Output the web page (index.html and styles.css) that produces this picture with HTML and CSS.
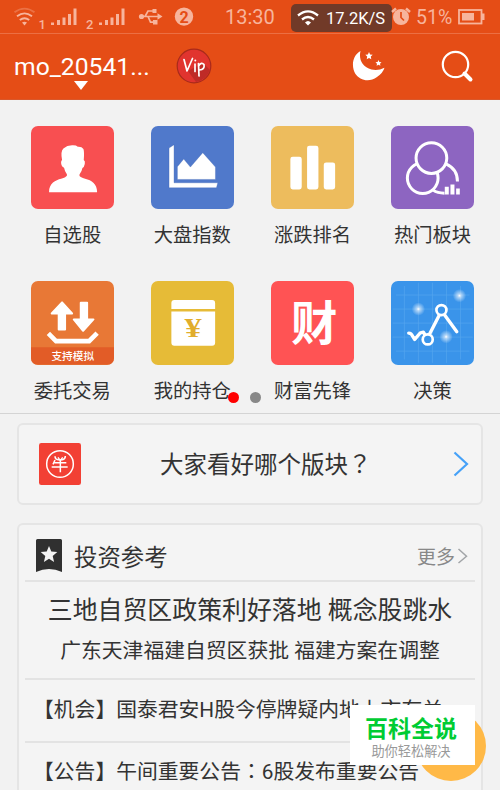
FILE: index.html
```html
<!DOCTYPE html>
<html lang="zh-CN">
<head>
<meta charset="utf-8">
<title>自选股</title>
<link rel="stylesheet" href="styles.css">
</head>
<body>
<div class="phone">
  <header class="top">
    <div class="status">
      <svg class="status-left" viewBox="0 0 200 33">
        <g fill="none" stroke="#f7b49c" stroke-width="1.9">
          <path d="M14.5 12.2Q24.5 5 34.5 12.2" opacity=".35"/>
          <path d="M17 16.2Q24.500 10.500 32 16.200"/>
          <path d="M19.800 20Q24.500 16.500 29.200 20"/>
        </g>
        <g fill="#f7b49c">
          <path d="M22 22.500Q24.500 21 27 22.500L24.500 25.500z"/>
          <path d="M51 22.500h3v2.500h-3zM57 20h3v5h-3zM62.500 17.500h3V25h-3zM68 14h3v11h-3zM73.500 8.500h3V25h-3z"/>
          <path d="M99 22.500h3v2.500h-3zM105 20h3v5h-3zM110.500 17.500h3V25h-3zM116 14h3v11h-3zM121.500 8.500h3V25h-3z"/>
          <circle cx="141.500" cy="16.500" r="2.600"/>
          <path d="M157.500 13.300l5 3.200-5 3.200z"/>
          <rect x="152.500" y="9" width="4" height="4"/>
          <rect x="153" y="20" width="4.500" height="4.500"/>
          <circle cx="184" cy="16.600" r="9.200"/>
        </g>
        <path d="M141 16.500h18M145 16.500l3-5.500h6M148 16.500l2.500 5.700h4" fill="none" stroke="#f7b49c" stroke-width="1.700"/>
        <text class="sim" x="38.500" y="28.500">1</text>
        <text class="sim" x="86" y="28.500">2</text>
        <text class="count" x="184" y="22.500">2</text>
      </svg>
      <span class="clock">13:30</span>
      <div class="speed">
        <svg width="22" height="18" viewBox="0 0 22 18">
          <g fill="none" stroke="#fff" stroke-width="2.300"><path d="M1 6.500Q11-1.800 21 6.500"/><path d="M5 10.500Q11 5.500 17 10.500"/></g>
          <path d="M8 13.500Q11 10.500 14 13.500L11 16.500z" fill="#fff"/>
        </svg>
        <span>17.2K/S</span>
      </div>
      <svg class="alarm" width="20" height="20" viewBox="0 0 20 20">
        <circle cx="10" cy="10" r="8" fill="#f7b49c"/>
        <path d="M10 5v5.500l3 3" fill="none" stroke="#e54d16" stroke-width="1.700"/>
        <path d="M1 5L5 1.500M15 1.500L19 5" stroke="#f7b49c" stroke-width="2.500"/>
      </svg>
      <span class="percent">51%</span>
      <svg class="battery" width="27" height="16" viewBox="0 0 27 16">
        <rect x="1" y="1" width="22.500" height="13.500" fill="none" stroke="#f7b49c" stroke-width="1.800"/>
        <path d="M4 4h12v7.500H4zM24 4.500h2.500v6.500H24z" fill="#f7b49c"/>
      </svg>
    </div>
    <div class="bar">
      <div class="user">
        <span class="name">mo_20541...</span>
        <span class="caret"></span>
      </div>
      <svg class="vip" width="36" height="36" viewBox="0 0 36 36">
        <circle cx="18" cy="18" r="16.800" fill="#e1342f" stroke="#a92a1b" stroke-width="1.200"/>
        <path d="M12 23L27 15l7 7Q30 32 20 34z" fill="#bf2b27"/>
        <g fill="none" stroke="#fff" stroke-width="1.700" stroke-linecap="round" stroke-linejoin="round">
          <path d="M8 11.500l3 11.500L16.500 10.500M19 16v7.500M22.500 15.500L23 28M22.500 18q3-4.500 5.500-1.500Q29 21.500 23.500 22"/>
        </g>
        <circle cx="19.300" cy="12.500" r="1" fill="#fff"/>
      </svg>
      <svg class="moon" width="34" height="32" viewBox="0 0 34 32">
        <g fill="#fff">
          <path d="M8.500 1C-.5 6-.5 18 3.500 24S17 33 25 27Q31 23 32.500 17.800 26 21 19.500 19.500C10 17 6.500 9 8.500 1z"/>
          <path d="M17 2l1.100 2.400 2.600.4-1.900 1.800.5 2.700L17 8l-2.300 1.300.5-2.700-1.900-1.800 2.600-.4z"/>
          <path d="M26.500 10l.9 1.900 2.100.3-1.500 1.500.4 2.100-1.900-1-1.900 1 .4-2.100-1.500-1.500 2.100-.3z"/>
        </g>
      </svg>
      <svg class="search" width="34" height="34" viewBox="0 0 34 34">
        <circle cx="14.500" cy="14.500" r="12.700" fill="none" stroke="#fff" stroke-width="2.200"/>
        <path d="M23.500 23.500l6 6" stroke="#fff" stroke-width="4" stroke-linecap="round"/>
      </svg>
    </div>
  </header>

  <nav class="apps">
    <a class="app">
      <svg class="tile red" viewBox="0 0 250 250"><path fill="#fff" d="M54 198c0-27 20-36 36-40 14-4 20-8 17-14q-6-8-8-19-8-3-9-15 0-6 3-8-5-27 4-35 12-10 29-9 10 0 14 4 12-1 17 7 3 9 1 33 5 3 3 12-2 10-7 12-2 11-8 18c-4 7 4 10 16 14 20 5 36 15 36 40z"/></svg>
      <span>自选股</span>
    </a>
    <a class="app">
      <svg class="tile blue" viewBox="0 0 250 250"><path fill="#fff" stroke="#3e63b4" stroke-width="1" d="M54 66l15-10v114h131l-4 15H54zM79 122l19-23 20 24 37-43 38 43v37H79z"/></svg>
      <span>大盘指数</span>
    </a>
    <a class="app">
      <svg class="tile amber" viewBox="0 0 250 250"><g fill="#fff"><rect x="58" y="92" width="34" height="98" rx="7"/><rect x="108" y="59" width="34" height="131" rx="7"/><rect x="158" y="109" width="34" height="81" rx="7"/></g></svg>
      <span>涨跌排名</span>
    </a>
    <a class="app">
      <svg class="tile purple" viewBox="0 0 250 250"><g fill="none" stroke="#fff" stroke-width="9"><path d="M166 114q33 15 33 52M126 192q13 9 34 9"/><circle cx="95" cy="156" r="46"/><circle cx="121" cy="96" r="46" fill="#8d65c1"/></g><path fill="#fff" d="M161 182h12v23h-12zM178 175h12v30h-12zM195 187h11v18h-11z"/></svg>
      <span>热门板块</span>
    </a>
    <a class="app">
      <svg class="tile orange" viewBox="0 0 250 250"><path fill="#e25c27" d="M0 198h250v52H0z"/><g fill="#fff" stroke="#fff" stroke-width="6" stroke-linejoin="round"><path d="M93 64l30 33h-21v48H83V97H62zM149 65h19v50h19l-31 34-28-34h21z"/></g><path d="M52 157l23 23h99l24-24" fill="none" stroke="#fff" stroke-width="14"/><text class="tile-note" x="125" y="237">支持模拟</text></svg>
      <span>委托交易</span>
    </a>
    <a class="app">
      <svg class="tile gold" viewBox="0 0 250 250"><path fill="#fff" d="M61 84V66q0-9 9-9h113q9 0 9 9v18zM61 91h131v94q0 9-9 9H70q-9 0-9-9z"/><text class="yen" transform="translate(126 168) scale(1.25 1)">¥</text></svg>
      <span>我的持仓</span>
    </a>
    <a class="app">
      <svg class="tile coral" viewBox="0 0 250 250"><text class="wealth" x="129" y="178">财</text></svg>
      <span>财富先锋</span>
    </a>
    <a class="app">
      <svg class="tile sky" viewBox="0 0 250 250">
        <defs><radialGradient id="glow"><stop offset="0" stop-color="#fff"/><stop offset=".25" stop-color="#fff" stop-opacity=".6"/><stop offset="1" stop-color="#fff" stop-opacity="0"/></radialGradient></defs>
        <path stroke="#55a7ef" stroke-width="2" fill="none" d="M40 15v220M82 5v240M124 5v240M166 5v240M208 15v220M15 42h220M5 84h240M5 126h240M5 168h240M15 210h220"/>
        <g fill="url(#glow)"><circle cx="82" cy="84" r="20"/><circle cx="205" cy="44" r="20"/><circle cx="165" cy="167" r="20"/></g>
        <g fill="none" stroke="#fff" stroke-width="10" stroke-linecap="round" stroke-linejoin="round"><path d="M53 156q8 0 12 10l6 9 17-20 9-2 5 8M116 158l28-55M160 101l37 51"/></g>
        <g fill="#3a94ea" stroke="#fff" stroke-width="8"><circle cx="151" cy="87" r="15"/><circle cx="110" cy="175" r="15"/></g>
      </svg>
      <span>决策</span>
    </a>
    <div class="dots"><i class="on"></i><i></i></div>
  </nav>

  <main class="feed">
    <section class="card poll">
      <svg width="42" height="42" viewBox="0 0 126 126">
        <rect width="126" height="126" rx="7" fill="#f24034"/>
        <g fill="none" stroke="#fff"><circle cx="63" cy="63" r="40" stroke-width="4.500"/><path stroke-width="4.500" d="M44 59h38M38 72h48M64 52v36M48 51l-6 13M48 40q0 10 9 10h13q9-1 9-11"/><path stroke-width="4" d="M57 43l7 10 7-10"/></g>
      </svg>
      <h2>大家看好哪个版块<span class="mark" lang="zh-TW">？</span></h2>
      <svg class="go" width="18" height="28" viewBox="0 0 18 28"><path d="M2.500 2.500L15 14 2.500 25.500" fill="none" stroke="#45a1f8" stroke-width="2.200"/></svg>
    </section>

    <section class="card news">
      <div class="news-head">
        <svg width="26" height="34" viewBox="0 0 26 34"><path fill="#303030" d="M1.500 0h23q1.500 0 1.500 1.500V33q-13-6-26 0V1.500Q0 0 1.500 0z"/><path fill="#f4f4f4" d="M13 7l2.300 5.600 6 .5-4.600 4 1.400 5.900-5.100-3.200L7.900 23l1.400-5.900-4.600-4 6-.5z"/></svg>
        <h2>投资参考</h2>
        <span class="more">更多</span>
        <svg width="11" height="18" viewBox="0 0 11 18"><path d="M1.500 2L9.500 9.300 1.500 16" fill="none" stroke="#a2a5a8" stroke-width="1.500"/></svg>
      </div>
      <div class="lead">
        <h3>三地自贸区政策利好落地 概念股跳水</h3>
        <p>广东天津福建自贸区获批 福建方案在调整</p>
      </div>
      <p class="item">【机会】国泰君安H股今停牌疑内地上市有关</p>
      <p class="item last">【公告】午间重要公告<span class="mark" lang="zh-TW">：</span>6股发布重要公告</p>
    </section>
  </main>

  <div class="bubble"></div>
  <aside class="stamp">
    <strong>百科全说</strong>
    <span>助你轻松解决</span>
  </aside>
</div>
</body>
</html>
```
FILE: styles.css
```css
* { box-sizing: border-box; }
body {
  margin: 0;
  background: #f2f2f2;
  color: #333;
  font-family: Roboto, "Noto Sans CJK SC", sans-serif;
}
h2, h3, p { margin: 0; font-weight: 400; white-space: nowrap; }
svg { display: block; flex: none; }

.phone {
  position: relative;
  width: 500px;
  height: 790px;
  overflow: hidden;
}

.top { height: 100px; background: #e54d16; border-bottom: 1px solid #d9582b; }
.status {
  display: flex;
  align-items: center;
  height: 34px;
  border-bottom: 1px solid #ec6f43;
  color: #f7b49c;
  font-size: 20px;
}
.status-left { width: 200px; height: 33px; }
.sim { font: 500 13px Roboto, sans-serif; fill: #f7b49c; }
.count { font: 700 16px Roboto, sans-serif; fill: #e54d16; text-anchor: middle; }
.clock { width: 66px; margin-left: 25px; line-height: 33px; padding-top: 2px; }
.speed {
  display: flex;
  align-items: center;
  gap: 7px;
  width: 101px;
  height: 28px;
  margin-top: 3px;
  padding-left: 6px;
  border-radius: 5px;
  background: #713a28;
  color: #fff;
  font-size: 16.500px;
}
.speed span { padding-top: 1px; }
.alarm { margin-left: -1px; }
.percent { width: 42px; margin-left: 5px; padding-top: 2px; font-size: 19.500px; }
.battery { margin-top: 1px; }

.bar { display: flex; height: 65px; color: #fff; }
.user { width: 162px; padding: 18px 0 0 14px; }
.name { display: block; font-size: 24.700px; line-height: 30px; }
.caret {
  display: block;
  margin: -1px 0 0 60px;
  width: 14px;
  height: 9px;
  background: #fff;
  clip-path: polygon(0 0, 100% 0, 50% 100%);
}
.vip { margin: 14px 0 0 14px; }
.moon { margin: 16px 0 0 140px; }
.search { margin: 16px 0 0 55px; }

.apps {
  position: relative;
  display: grid;
  grid-template-columns: repeat(4, 83.5px);
  grid-auto-rows: 155.500px;
  column-gap: 36.600px;
  height: 314px;
  padding: 25.500px 0 0 30.500px;
  border-bottom: 1px solid #d4d4d4;
}
.app {
  display: flex;
  flex-direction: column;
  align-items: center;
  gap: 12px;
  font-size: 19.300px;
  line-height: 30px;
  white-space: nowrap;
}
.tile { width: 83.500px; height: 83.500px; border-radius: 7px; }
.red { background: #f84f51; }
.blue { background: #5079cb; }
.amber { background: #edbc5d; }
.purple { background: #8d65c1; }
.orange { background: #e87836; }
.gold { background: #e6bb37; }
.coral { background: #ff5354; }
.sky { background: #3a94ea; }
.tile-note { font: 500 32px "Noto Sans CJK SC", sans-serif; fill: #fff; text-anchor: middle; }
.yen { font: 700 82px "Liberation Serif", serif; fill: #e1ad2c; text-anchor: middle; }
.wealth { font: 700 139px "Noto Sans CJK SC", sans-serif; fill: #fff; text-anchor: middle; }

.dots {
  position: absolute;
  left: 228px;
  top: 292px;
  display: flex;
  gap: 11px;
}
.dots i { width: 11px; height: 11px; border-radius: 50%; background: #888; }
.dots .on { background: #f00; }

.feed { padding: 9px 17px 0; }
.card {
  border: 2px solid #e5e5e5;
  border-radius: 6px;
  background: #f4f4f4;
}
.poll {
  display: flex;
  align-items: center;
  height: 82px;
  padding: 0 11px 0 20px;
}
.poll h2 { margin-left: 79px; padding-top: 1px; font-size: 23.500px; line-height: 36px; }
.go { margin-left: auto; }
.mark { font-family: "Noto Sans CJK TC", sans-serif; line-height: 1; }

.news { height: 290px; margin-top: 18px; padding: 0 6px; }
.news-head {
  display: flex;
  align-items: center;
  height: 57px;
  padding: 6px 7px 0 11px;
  border-bottom: 2px solid #e3e3e3;
}
.news-head h2 { margin: 0 auto 0 12px; font-size: 23.400px; }
.more { margin-right: 2px; color: #888; font-size: 19px; }
.lead {
  height: 98px;
  padding-top: 10px;
  border-bottom: 2px solid #e3e3e3;
  text-align: center;
}
.lead h3 { font-size: 24.900px; line-height: 38px; }
.lead p { font-size: 20.800px; line-height: 42px; }
.item {
  height: 63px;
  padding: 0 30px 0 8px;
  border-bottom: 2px solid #e3e3e3;
  font-size: 20.800px;
  line-height: 61px;
}
.last { border-bottom: 0; line-height: 59px; }

.bubble {
  position: absolute;
  left: 416px;
  top: 711px;
  width: 70px;
  height: 70px;
  border-radius: 50%;
  background: #ffb947;
}
.stamp {
  position: absolute;
  left: 350px;
  top: 705px;
  width: 125px;
  height: 60px;
  padding: 9px 3px 0 0;
  background: #fff;
  text-align: center;
  white-space: nowrap;
}
.stamp strong { display: block; color: #0c3; font-size: 23px; font-weight: 700; line-height: 32px; }
.stamp span { display: block; color: #999; font-size: 13.200px; line-height: 12px; }
```
